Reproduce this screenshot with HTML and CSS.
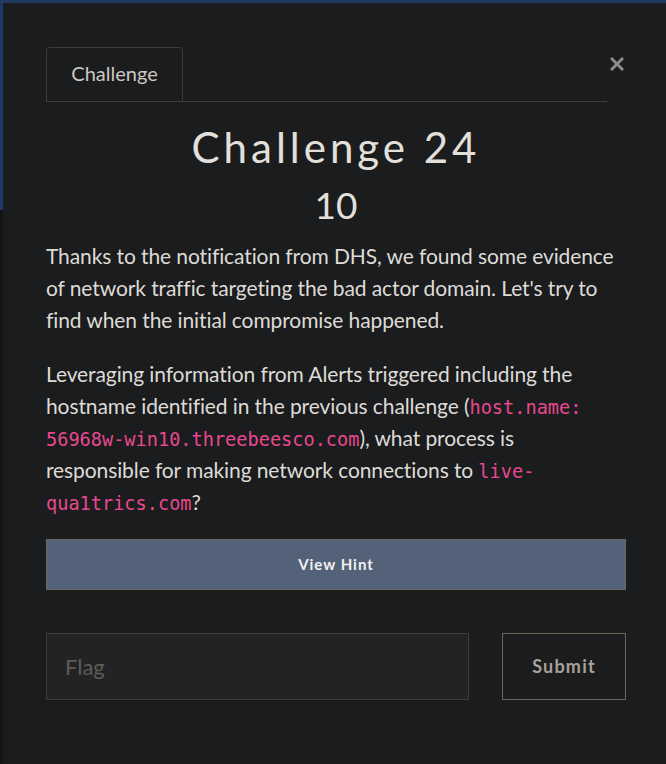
FILE: index.html
```html
<!DOCTYPE html>
<html lang="en">
<head>
<meta charset="utf-8">
<title>Challenge 24</title>
<link rel="stylesheet" href="styles.css">
</head>
<body>
<div class="modal">
  <div class="modal-head">
    <nav class="tabs">
      <div class="tab">Challenge</div>
    </nav>
    <button class="close" aria-label="Close">
      <svg width="14" height="14" viewBox="0 0 14 14"><path d="M2 2L12 12M12 2L2 12" stroke="#8c8c8c" stroke-width="3" stroke-linecap="square"/></svg>
    </button>
  </div>
  <h2 class="title">Challenge 24</h2>
  <h3 class="points">10</h3>
  <div class="desc">
    <p>Thanks to the notification from DHS, we found some evidence of network traffic targeting the bad actor domain. Let's try to find when the initial compromise happened.</p>
    <p>Leveraging information from Alerts triggered including the hostname identified in the previous challenge (<code>host.name: 56968w-win10.threebeesco.com</code>), what process is responsible for making network connections to <code>live-qua1trics.com</code>?</p>
  </div>
  <button class="hint">View Hint</button>
  <form class="flag-row">
    <input class="flag" type="text" placeholder="Flag">
    <button class="submit" type="button">Submit</button>
  </form>
</div>
</body>
</html>
```
FILE: styles.css
```css
html, body {
  margin: 0;
  height: 100%;
  overflow: hidden;
}
body {
  background: linear-gradient(to bottom, #1f3a60 0, #1f3a60 210px, #131416 210px);
  padding: 3px 0 0 3px;
  box-sizing: border-box;
  font-family: Lato, "Liberation Sans", sans-serif;
}
.modal {
  background: #1b1c1e;
  width: 666px;
  min-height: 800px;
  box-sizing: border-box;
  padding: 44px 43px 0 43px;
}
.modal-head {
  display: flex;
  align-items: flex-start;
}
.tabs {
  flex: 1;
  display: flex;
  border-bottom: 1px solid #3a3b3d;
}
.tab {
  border: 1px solid #3a3b3d;
  border-bottom: none;
  border-radius: 4px 4px 0 0;
  width: 137px;
  box-sizing: border-box;
  height: 54px;
  line-height: 51px;
  text-align: center;
  font-size: 20px;
  color: #cbc7c1;
}
.close {
  width: 19px;
  padding: 0;
  margin: 10px 0 0 0;
  border: none;
  background: none;
  display: flex;
  justify-content: center;
}
.close svg { display: block; }
.title {
  margin: 20px 0 0 0;
  text-align: center;
  font-weight: 400;
  font-size: 42px;
  line-height: 1.2;
  letter-spacing: 4px;
  color: #e3e0db;
}
.points {
  margin: 11px 0 0 0;
  text-align: center;
  font-weight: 400;
  font-size: 37px;
  line-height: 1.2;
  color: #e3e0db;
}
.desc {
  margin-top: 12px;
  padding-right: 7px;
  color: #dedbd6;
  font-size: 21px;
  line-height: 32px;
  letter-spacing: -0.1px;
}
.desc p { margin: 0 0 22px 0; }
.desc p:last-child { margin-bottom: 0; }
code {
  font-family: "DejaVu Sans Mono", "Liberation Mono", monospace;
  font-size: 18.6px;
  line-height: 1;
  letter-spacing: 0;
  color: #e8488f;
}
.hint {
  display: block;
  width: 100%;
  margin-top: 21px;
  height: 51px;
  background: #536278;
  border: 1px solid #6c6a5e;
  color: #f1f1f1;
  font-family: Lato, "Liberation Sans", sans-serif;
  font-size: 15px;
  font-weight: 700;
  letter-spacing: 1px;
}
.flag-row {
  display: flex;
  gap: 33px;
  margin: 43px 0 0 0;
}
.flag {
  flex: 1;
  height: 67px;
  box-sizing: border-box;
  background: #222325;
  border: 1px solid #3d3d3e;
  padding: 0 18px;
  font-family: Lato, "Liberation Sans", sans-serif;
  font-size: 22px;
  color: #dedbd6;
  outline: none;
}
.flag::placeholder { color: #5e5c57; }
.submit {
  width: 124px;
  height: 67px;
  box-sizing: border-box;
  background: transparent;
  border: 1px solid #6d665a;
  color: #a8a298;
  font-family: Lato, "Liberation Sans", sans-serif;
  font-size: 18px;
  font-weight: 700;
  letter-spacing: 1.2px;
}
```
